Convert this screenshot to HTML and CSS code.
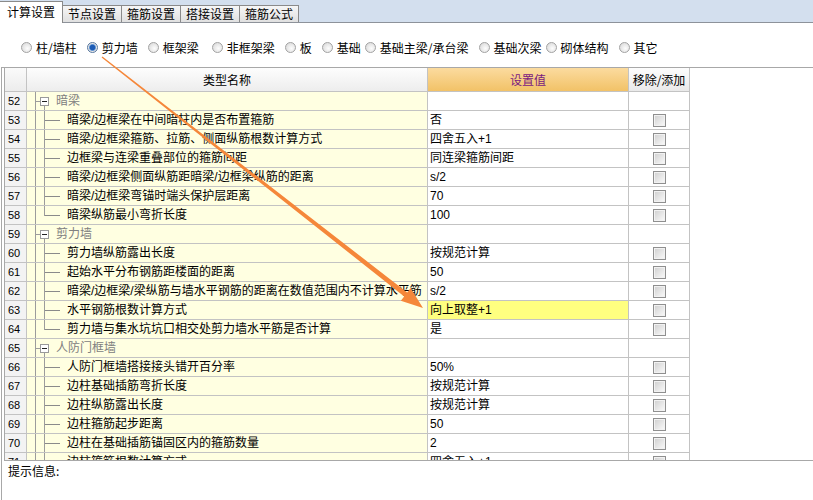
FILE: index.html
```html
<!DOCTYPE html>
<html>
    <head>
        <meta charset="UTF-8">
        <title>计算设置</title>
        <link rel="stylesheet" href="styles.css">
    </head>

    <body>
        <div class="tabs">
            <span class="tab active">计算设置</span>
            <span class="tab">节点设置</span>
            <span class="tab">箍筋设置</span>
            <span class="tab">搭接设置</span>
            <span class="tab">箍筋公式</span>
        </div>

        <!-- 构件类型 -->
        <div class="options">
            <label class="opt"><span class="radio"></span>柱/墙柱</label>
            <label class="opt"><span class="radio on"></span>剪力墙</label>
            <label class="opt wide"><span class="radio"></span>框架梁</label>
            <label class="opt"><span class="radio"></span>非框架梁</label>
            <label class="opt"><span class="radio"></span>板</label>
            <label class="opt tight"><span class="radio"></span>基础</label>
            <label class="opt"><span class="radio"></span>基础主梁/承台梁</label>
            <label class="opt tight"><span class="radio"></span>基础次梁</label>
            <label class="opt"><span class="radio"></span>砌体结构</label>
            <label class="opt"><span class="radio"></span>其它</label>
        </div>

        <div class="main">
            <div class="grid">
                <div class="row head">
                    <div class="c-num"></div>
                    <div class="c-name">类型名称</div>
                    <div class="c-val">设置值</div>
                    <div class="c-chk">移除/添加</div>
                </div>

                <div class="row group">
                    <div class="c-num">52</div>
                    <div class="c-name"><span class="fold"></span>暗梁</div>
                    <div class="c-val"></div>
                    <div class="c-chk"></div>
                </div>
                <div class="row">
                    <div class="c-num">53</div>
                    <div class="c-name">暗梁/边框梁在中间暗柱内是否布置箍筋</div>
                    <div class="c-val">否</div>
                    <div class="c-chk"><span class="chk"></span></div>
                </div>
                <div class="row">
                    <div class="c-num">54</div>
                    <div class="c-name">暗梁/边框梁箍筋、拉筋、侧面纵筋根数计算方式</div>
                    <div class="c-val">四舍五入+1</div>
                    <div class="c-chk"><span class="chk"></span></div>
                </div>
                <div class="row">
                    <div class="c-num">55</div>
                    <div class="c-name">边框梁与连梁重叠部位的箍筋间距</div>
                    <div class="c-val">同连梁箍筋间距</div>
                    <div class="c-chk"><span class="chk"></span></div>
                </div>
                <div class="row">
                    <div class="c-num">56</div>
                    <div class="c-name">暗梁/边框梁侧面纵筋距暗梁/边框梁纵筋的距离</div>
                    <div class="c-val">s/2</div>
                    <div class="c-chk"><span class="chk"></span></div>
                </div>
                <div class="row">
                    <div class="c-num">57</div>
                    <div class="c-name">暗梁/边框梁弯锚时端头保护层距离</div>
                    <div class="c-val">70</div>
                    <div class="c-chk"><span class="chk"></span></div>
                </div>
                <div class="row last">
                    <div class="c-num">58</div>
                    <div class="c-name">暗梁纵筋最小弯折长度</div>
                    <div class="c-val">100</div>
                    <div class="c-chk"><span class="chk"></span></div>
                </div>

                <div class="row group">
                    <div class="c-num">59</div>
                    <div class="c-name"><span class="fold"></span>剪力墙</div>
                    <div class="c-val"></div>
                    <div class="c-chk"></div>
                </div>
                <div class="row">
                    <div class="c-num">60</div>
                    <div class="c-name">剪力墙纵筋露出长度</div>
                    <div class="c-val">按规范计算</div>
                    <div class="c-chk"><span class="chk"></span></div>
                </div>
                <div class="row">
                    <div class="c-num">61</div>
                    <div class="c-name">起始水平分布钢筋距楼面的距离</div>
                    <div class="c-val">50</div>
                    <div class="c-chk"><span class="chk"></span></div>
                </div>
                <div class="row">
                    <div class="c-num">62</div>
                    <div class="c-name">暗梁/边框梁/梁纵筋与墙水平钢筋的距离在数值范围内不计算水平筋</div>
                    <div class="c-val">s/2</div>
                    <div class="c-chk"><span class="chk"></span></div>
                </div>
                <div class="row">
                    <div class="c-num">63</div>
                    <div class="c-name">水平钢筋根数计算方式</div>
                    <div class="c-val selected">向上取整+1</div>
                    <div class="c-chk"><span class="chk"></span></div>
                </div>
                <div class="row last">
                    <div class="c-num">64</div>
                    <div class="c-name">剪力墙与集水坑坑口相交处剪力墙水平筋是否计算</div>
                    <div class="c-val">是</div>
                    <div class="c-chk"><span class="chk"></span></div>
                </div>

                <div class="row group">
                    <div class="c-num">65</div>
                    <div class="c-name"><span class="fold"></span>人防门框墙</div>
                    <div class="c-val"></div>
                    <div class="c-chk"></div>
                </div>
                <div class="row">
                    <div class="c-num">66</div>
                    <div class="c-name">人防门框墙搭接接头错开百分率</div>
                    <div class="c-val">50%</div>
                    <div class="c-chk"><span class="chk"></span></div>
                </div>
                <div class="row">
                    <div class="c-num">67</div>
                    <div class="c-name">边柱基础插筋弯折长度</div>
                    <div class="c-val">按规范计算</div>
                    <div class="c-chk"><span class="chk"></span></div>
                </div>
                <div class="row">
                    <div class="c-num">68</div>
                    <div class="c-name">边柱纵筋露出长度</div>
                    <div class="c-val">按规范计算</div>
                    <div class="c-chk"><span class="chk"></span></div>
                </div>
                <div class="row">
                    <div class="c-num">69</div>
                    <div class="c-name">边柱箍筋起步距离</div>
                    <div class="c-val">50</div>
                    <div class="c-chk"><span class="chk"></span></div>
                </div>
                <div class="row">
                    <div class="c-num">70</div>
                    <div class="c-name">边柱在基础插筋锚固区内的箍筋数量</div>
                    <div class="c-val">2</div>
                    <div class="c-chk"><span class="chk"></span></div>
                </div>
                <div class="row">
                    <div class="c-num">71</div>
                    <div class="c-name">边柱箍筋根数计算方式</div>
                    <div class="c-val">四舍五入+1</div>
                    <div class="c-chk"><span class="chk"></span></div>
                </div>
            </div>

            <div class="info">提示信息:</div>
        </div>

        <!-- 标注箭头 -->
        <svg class="arrow" width="813" height="500" viewBox="0 0 813 500">
            <polygon fill="#f5873a" points="101.6,57.5 102.4,56.5 407.2,292.4 410.6,288.1 423,308 400.8,300.7 404.2,296.4"/>
        </svg>
    </body>
</html>
```

FILE: styles.css
```css
body{
    margin: 0;
    height: 500px;
    overflow: hidden;
    position: relative;
    font-family: "Liberation Sans", "Noto Sans CJK SC", sans-serif;
    font-size: 12px;
    color: #000;
    background: #fff;
}

/* 顶部页签 */
.tabs{
    display: flex;
    align-items: flex-end;
    height: 22px;
    background: #d3dfee;
    border-bottom: 1px solid #8d929a;
}
.tab{
    height: 16px;
    line-height: 16px;
    padding: 0 5px;
    border: 1px solid #8a8a8a;
    border-left: none;
    border-bottom: none;
    background: linear-gradient(#f6f6f6, #e0e0e0);
    font-family: "Noto Sans CJK SC", sans-serif;
}
.tab.active{
    height: 21px;
    line-height: 20px;
    padding: 0 7px;
    margin-bottom: -1px;
    background: #fff;
}

/* 单选项 */
.options{
    display: flex;
    align-items: center;
    height: 44px;
    padding: 4px 0 0 21px;
    box-sizing: border-box;
    font-family: "Noto Sans CJK SC", sans-serif;
}
.opt{
    display: flex;
    align-items: center;
    margin-right: 10px;
}
.opt.wide{
    margin-right: 13px;
}
.opt.tight{
    margin-right: 4px;
}
.radio{
    width: 9px;
    height: 9px;
    border: 1px solid #a2a2a2;
    border-radius: 50%;
    margin-right: 4px;
    background: radial-gradient(circle at 60% 60%, #fdfdfd, #d4d4d4);
}
.radio.on{
    border-color: #56779f;
    background: radial-gradient(circle, #1c5bb5 0 2.4px, #78a3d8 3.2px, #e6e6e6 3.9px);
}

/* 表格 */
.main{
    height: 432px;
    margin-left: 1px;
    border-top: 1px solid #a8a8a8;
    border-left: 1px solid #a8a8a8;
}
.grid{
    height: 392px;
    margin-left: 2px;
    overflow: hidden;
    border-left: 1px solid #a8a8a8;
    border-bottom: 1px solid #a8a8a8;
}
.row{
    display: grid;
    grid-template-columns: 22px 401px 201px 61px;
    height: 19px;
    line-height: 18px;
}
.row > div{
    border-right: 1px solid #c3c3c3;
    border-bottom: 1px solid #c3c3c3;
    white-space: nowrap;
    overflow: hidden;
}
.c-num{
    padding-left: 3px;
    font-size: 11px;
    background: #f3f3f3;
}
.c-name{
    padding-left: 40px;
    background:
        linear-gradient(#9c9c9c, #9c9c9c) 8px 0 / 1px 100% no-repeat,
        linear-gradient(#9c9c9c, #9c9c9c) 17px 0 / 1px 100% no-repeat,
        linear-gradient(#8a8a8a, #8a8a8a) 17px 9px / 16px 1px no-repeat,
        #ffffe1;
}
.row.last .c-name{
    background:
        linear-gradient(#9c9c9c, #9c9c9c) 8px 0 / 1px 100% no-repeat,
        linear-gradient(#9c9c9c, #9c9c9c) 17px 0 / 1px 10px no-repeat,
        linear-gradient(#8a8a8a, #8a8a8a) 17px 9px / 16px 1px no-repeat,
        #ffffe1;
}
.row.group .c-name{
    display: flex;
    align-items: center;
    padding-left: 13px;
    color: #808080;
    background:
        linear-gradient(#9c9c9c, #9c9c9c) 8px 0 / 1px 100% no-repeat,
        linear-gradient(#9c9c9c, #9c9c9c) 8px 9px / 5px 1px no-repeat,
        linear-gradient(#9c9c9c, #9c9c9c) 17px 14px / 1px 4px no-repeat,
        #ffffe1;
}
.fold{
    width: 9px;
    height: 9px;
    box-sizing: border-box;
    margin-right: 7px;
    border: 1px solid #9a9a9a;
    background: linear-gradient(#222, #222) center / 5px 1px no-repeat, #fff;
}
.c-val{
    padding-left: 2px;
    background: #fff;
}
.c-val.selected{
    background: #ffff80;
}
.c-chk{
    display: flex;
    justify-content: center;
    align-items: center;
    background: #fff;
}
.chk{
    width: 11px;
    height: 11px;
    border: 1px solid #8f8f8f;
    background: linear-gradient(135deg, #cfcfcf, #fbfbfb);
    box-shadow: inset 0 0 0 1px #f2f2f2;
}

/* 表头 */
.row.head{
    height: 24px;
    line-height: 23px;
    text-align: center;
    font-family: "Noto Sans CJK SC", sans-serif;
}
.row.head .c-num{
    background: linear-gradient(#fafafa, #ececec);
}
.row.head .c-name{
    padding-left: 0;
    background: linear-gradient(#fdfdfd, #ededed);
}
.row.head .c-val{
    padding-left: 0;
    color: #7a1a80;
    background: linear-gradient(#fbdb9f, #f2c267);
}
.row.head .c-chk{
    display: block;
    background: linear-gradient(#fdfdfd, #e9e9e9);
}

.info{
    padding: 1px 0 0 6px;
    line-height: 18px;
    font-family: "Noto Sans CJK SC", sans-serif;
}

.arrow{
    position: absolute;
    top: 0;
    left: 0;
    pointer-events: none;
}
```
